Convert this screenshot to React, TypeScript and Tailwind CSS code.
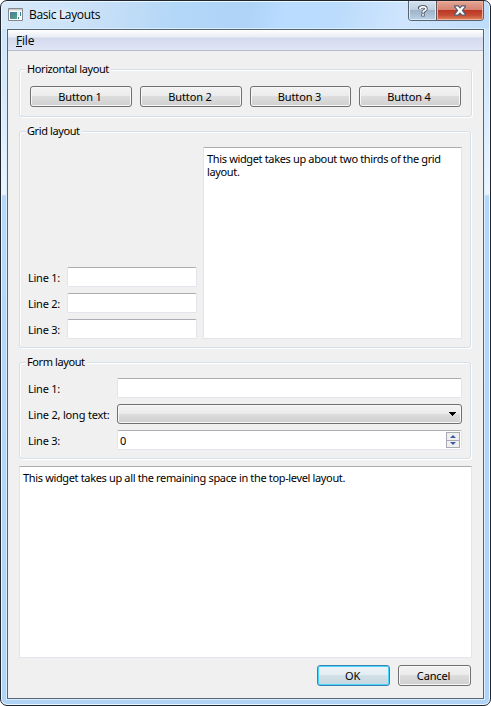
import type { ReactNode } from "react";

function Group({ title, titleClass, className, children }: { title: string; titleClass: string; className: string; children: ReactNode }) {
  return (
    <fieldset
      className={`box-border w-[452px] rounded-[3px] border border-[#d5dfe8] shadow-[1px_1px_0_#fff,inset_1px_1px_0_#fff] ${className}`}
    >
      <legend className={`h-[14px] bg-[#f0f0f0] pr-[2px] pl-[1px] leading-[14px] whitespace-nowrap ${titleClass}`}>{title}</legend>
      {children}
    </fieldset>
  );
}

const face =
  "rounded-[3px] border border-[#707070] bg-[linear-gradient(#f3f3f3_0%,#ebebeb_48%,#dddddd_50%,#cfcfcf_100%)] shadow-[inset_0_0_0_1px_#f8f8f8]";

function Button({ label, className }: { label: string; className: string }) {
  return <button className={`flex h-[21px] items-center justify-center pr-[2px] tracking-[-0.15px] ${face} ${className}`}>{label}</button>;
}

const field = "border border-[#e2e5ec] border-t-[#abadb3] bg-white";

function Line({ label, labelClass, children }: { label: string; labelClass: string; children: ReactNode }) {
  return (
    <label className="flex h-[20px] items-start justify-between">
      <span className={`mt-[4px] whitespace-nowrap ${labelClass}`}>{label}</span>
      {children}
    </label>
  );
}

export default function App() {
  return (
    <div className="h-[706px] w-[491px] overflow-hidden bg-white font-['Noto_Sans',sans-serif] text-[11px] leading-[13px] text-black">
      <div className="flex h-full flex-col rounded-[7px] border border-[#202631] bg-[linear-gradient(#c9e3fa_0px,#d5e8fc_90px,#edf5fe_193px,#b5d7fb_195px,#b1d3f6_100%)] px-[6px] pb-[6px] shadow-[inset_0_0_0_1px_#eaf8ff]">
        <header className="-mx-[5px] mt-px flex h-[27px] shrink-0 items-start justify-between rounded-t-[5px] bg-[linear-gradient(100deg,#d8eafa_0%,#c8e0f7_20%,#b2d7f7_36%,#aed3f7_50%,#b9dcff_58%,#bbdcfc_69%,#d0e5fd_82%,#bedcfa_100%)]">
          <div className="flex items-start pt-[5px] pl-[6px]">
            <svg className="mt-px" width="15" height="13" viewBox="0 0 15 13">
              <defs>
                <linearGradient id="pane" x1="0" y1="0" x2="1" y2="1">
                  <stop stopColor="#4778a4" />
                  <stop offset="1" stopColor="#55a878" />
                </linearGradient>
              </defs>
              <path d="M.5 .5h14v12H.5z" fill="#fff" stroke="#85898d" />
              <path d="M1 1h13v1.5H1z" fill="#c9cdd0" />
              <path d="M2 4h7v7H2z" fill="url(#pane)" />
              <path d="M10.5 9v2M12.5 4v4" stroke="#347fa0" />
              <path d="M10 4v4" stroke="#c8d6dd" />
            </svg>
            <span className="ml-[6px] bg-[radial-gradient(closest-side,#e6f2fdcc,#e6f2fd00)] font-['Open_Sans',sans-serif] text-[12px] leading-[16px] tracking-[-0.35px]">Basic Layouts</span>
          </div>
          <div className="mr-[5px] -mt-px flex h-[20px] w-[76px] shrink-0 overflow-hidden rounded-b-[4px] border border-t-0 border-[#566270]">
            <div className="flex w-[28px] items-center justify-center border-r border-[#64515a] bg-[linear-gradient(#d5e3ef_0%,#bfcfdf_45%,#9fb3c9_50%,#bad1e5_100%)] shadow-[inset_0_0_0_1px_#ddebf7]">
              <svg width="10" height="12" viewBox="0 0 10 12">
                <g fill="none">
                  <path d="M1 4.3V3.2Q1.8 1.7 5 1.7T8 3.8Q8 4.9 6.6 5.6T5 8M5 8.6v2.8" stroke="#515b6c" strokeWidth="3.4" />
                  <path d="M1.9 3.9Q1.9 1.9 5 1.9T8 3.8Q8 4.9 6.6 5.6T5 7.6M5 9v1.7" stroke="#fff" strokeWidth="1.7" />
                </g>
              </svg>
            </div>
            <div className="flex flex-1 items-center justify-center bg-[linear-gradient(#e5a795_0%,#d68473_45%,#bd3726_50%,#c54c34_75%,#e2875d_100%)] shadow-[inset_0_0_0_1px_#eeb09a]">
              <svg width="12" height="11" viewBox="0 0 12 11">
                <path d="M.7.8h3.5L6 2.8 7.8.8h3.5v1.1L8.4 5.4l2.9 3.6v1.2H7.8L6 8.1l-1.8 2.1H.7V9l2.9-3.6L.7 1.9z" fill="#fff" stroke="#53596a" strokeWidth="1.2" />
              </svg>
            </div>
          </div>
        </header>
        <main className="flex min-h-0 flex-1 flex-col border border-[#566575] bg-[#f0f0f0] shadow-[0_0_0_1px_#d9effe]">
          <nav className="flex h-[21px] shrink-0 items-center border-b border-[#b6bccc] bg-[linear-gradient(#ffffff_0px,#e8ecf5_7px,#d4daed_8px,#e0e5f5_20px)] pt-[2px] pl-[8px] font-['Open_Sans',sans-serif] text-[12px] tracking-[-0.2px]">
            <span className="border-b border-black leading-[11px]">F</span>
            <span className="pb-px leading-[11px]">ile</span>
          </nav>
          <div className="flex min-h-0 flex-1 flex-col pt-[11px] pl-[11px]">
            <Group title="Horizontal layout" titleClass="-ml-[4px] tracking-[-0.4px]" className="h-[55px] px-[10px]">
              <div className="mt-[10px] flex gap-[8px]">
                <Button label="Button 1" className="w-[102px]" />
                <Button label="Button 2" className="w-[102px]" />
                <Button label="Button 3" className="w-[101px]" />
                <Button label="Button 4" className="w-[102px]" />
              </div>
            </Group>
            <Group title="Grid layout" titleClass="-ml-[2px] tracking-[-0.4px]" className="mt-[7px] h-[224px] px-[8px]">
              <div className="mt-[9px] flex h-[192px] justify-between">
                <div className="flex w-[169px] flex-col justify-end gap-[6px]">
                  {["Line 1:", "Line 2:", "Line 3:"].map((label) => (
                    <Line key={label} label={label} labelClass="tracking-[-0.25px]">
                      <input className={`h-[20px] w-[130px] rounded-[2px] ${field}`} />
                    </Line>
                  ))}
                </div>
                <div className={`w-[259px] pt-[4px] pl-[3px] tracking-[-0.35px] whitespace-pre-line ${field}`}>
                  {"This widget takes up about two thirds of the grid\nlayout."}
                </div>
              </div>
            </Group>
            <Group title="Form layout" titleClass="-ml-[2px] tracking-[-0.4px]" className="mt-[7px] h-[104px] px-[8px]">
              <div className="mt-[9px] flex flex-col gap-[6px]">
                <Line label="Line 1:" labelClass="tracking-[-0.25px]">
                  <input className={`h-[20px] w-[345px] rounded-[2px] ${field}`} />
                </Line>
                <Line label="Line 2, long text:" labelClass="tracking-[-0.2px]">
                  <div className={`flex h-[20px] w-[345px] items-center justify-end pr-[5px] ${face}`}>
                    <svg width="7" height="4" viewBox="0 0 7 4" shapeRendering="crispEdges">
                      <path d="M0 0h7v1H0zM1 1h5v1H1zM2 2h3v1H2zM3 3h1v1H3z" />
                    </svg>
                  </div>
                </Line>
                <Line label="Line 3:" labelClass="tracking-[-0.25px]">
                  <div className={`flex h-[20px] w-[345px] items-center justify-between rounded-[2px] pr-px pl-[2px] ${field}`}>
                    <span className="pt-px">0</span>
                    <div className="flex h-[16px] w-[14px] flex-col divide-y divide-[#a9abb2] border border-[#a9abb2] bg-[#f0f0f0]">
                      <div className="flex flex-1 items-center justify-center">
                        <svg width="6" height="3" viewBox="0 0 6 3">
                          <path d="M0 3h6L3 0z" fill="#4259a8" />
                        </svg>
                      </div>
                      <div className="flex flex-1 items-center justify-center">
                        <svg width="6" height="3" viewBox="0 0 6 3">
                          <path d="M0 0h6L3 3z" fill="#4259a8" />
                        </svg>
                      </div>
                    </div>
                  </div>
                </Line>
              </div>
            </Group>
            <div className={`mt-[7px] h-[192px] w-[453px] pt-[4px] pl-[3px] tracking-[-0.35px] ${field}`}>
              This widget takes up all the remaining space in the top-level layout.
            </div>
            <div className="mt-[7px] flex w-[452px] justify-end gap-[8px]">
              <button className="flex h-[21px] w-[73px] items-center justify-center rounded-[3px] border border-[#3c7fb1] bg-[linear-gradient(#edf3f6_0%,#e3edf2_48%,#d2e0e8_50%,#c7d6df_100%)] pr-[2px] tracking-[-0.2px] shadow-[inset_0_0_0_1px_#45d8fc]">
                OK
              </button>
              <Button label="Cancel" className="w-[73px]" />
            </div>
          </div>
        </main>
      </div>
    </div>
  );
}
